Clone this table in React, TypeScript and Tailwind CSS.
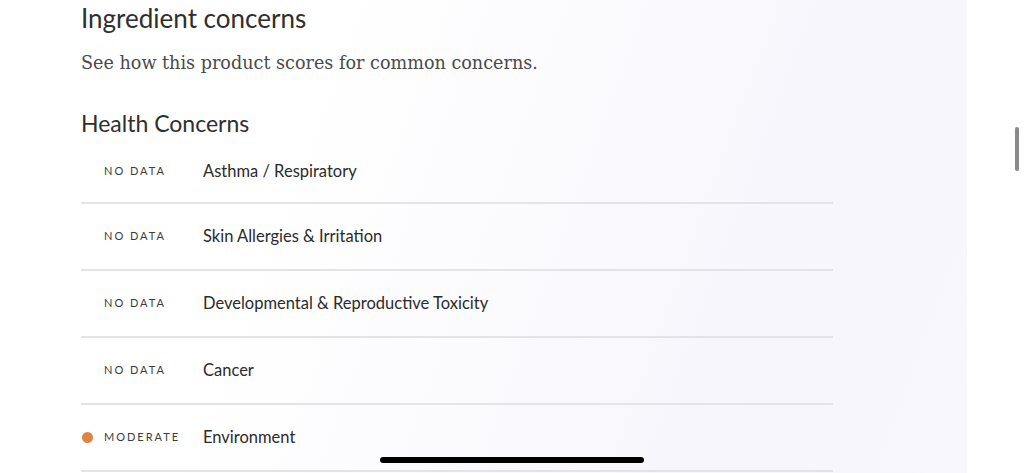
const concerns = [
  { score: "NO DATA", name: "Asthma / Respiratory" },
  { score: "NO DATA", name: "Skin Allergies & Irritation" },
  { score: "NO DATA", name: "Developmental & Reproductive Toxicity" },
  { score: "NO DATA", name: "Cancer" },
  { score: "MODERATE", name: "Environment", dot: true },
];

export default function App() {
  return (
    <div className="relative flex h-[473px] w-[1024px] overflow-hidden bg-white font-['Lato',sans-serif] text-[#2f2f2f]">
      <main className="h-full w-[967px] bg-[linear-gradient(110deg,#ffffff_30%,#f7f6fc_75%,#f8f7fd_100%)] pl-[81px]">
        <h1 className="pt-[1px] text-[26px] leading-[34px]">Ingredient concerns</h1>
        <p className="mt-[14px] font-['DejaVu_Serif',serif] text-[17.6px] leading-[28px] text-[#4a4a4a]">
          See how this product scores for common concerns.
        </p>
        <h2 className="mt-[31px] text-[23px] leading-[30px]">Health Concerns</h2>
        <ul className="w-[752px]">
          {concerns.map((c, i) => (
            <li
              key={c.name}
              className={`flex h-[67px] items-center border-b-2 border-[#e4e4e6] ${i === 0 ? "-mt-[1px] h-[52px] pt-[6px] pb-[2px]" : ""}`}
            >
              <span className="flex w-[122px] items-center">
                <span className={`ml-[1px] size-[11px] rounded-full ${c.dot ? "bg-[#e4823f]" : "bg-transparent"}`} />
                <span className="ml-[11px] text-[11px] tracking-[0.18em] text-[#3c3c3c]">{c.score}</span>
              </span>
              <span className="text-[16.5px] text-[#2b2b2b]">{c.name}</span>
            </li>
          ))}
        </ul>
      </main>
      <div className="absolute left-[1015px] top-[127px] h-[44px] w-[4px] rounded-full bg-[#8a8a8a]" />
      <div className="absolute left-[380px] top-[457px] h-[6px] w-[264px] rounded-full bg-black" />
    </div>
  );
}
